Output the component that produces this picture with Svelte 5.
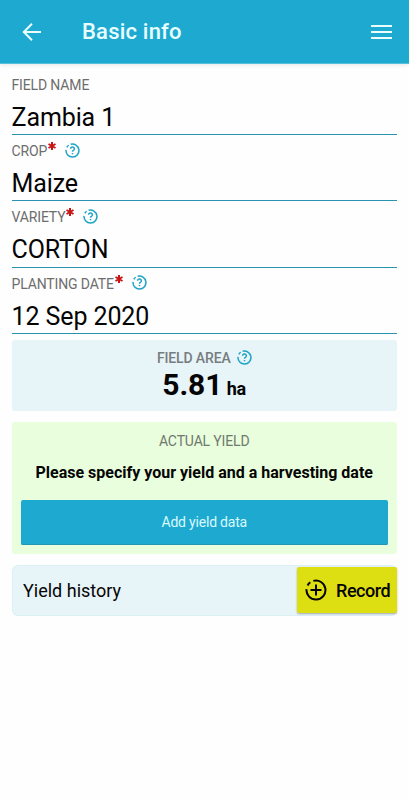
<script>
  const fields = [
    { label: 'Field name', value: 'Zambia 1' },
    { label: 'Crop', value: 'Maize', required: true },
    { label: 'Variety', value: 'CORTON', required: true },
    { label: 'Planting date', value: '12 Sep 2020', required: true }
  ]
</script>

{#snippet helpIcon()}
  <svg class="help" viewBox="0 0 16 16" aria-hidden="true">
    <path d="M6 1.4A6.9 6.9 0 1 1 1.1 7.3" />
    <path d="M2 4.6A6.9 6.9 0 0 1 3.9 2.4" />
    <path d="M6 6.2A2 1.9 0 1 1 9 7.8Q8 8.3 8 9.3M8 10.6V12.1" />
  </svg>
{/snippet}

<div class="screen">
  <header>
    <button class="back" aria-label="Back">
      <svg width="20" height="20" viewBox="0 0 20 20">
        <path d="M19 10H2M10 1.8L1.8 10L10 18.2" />
      </svg>
    </button>
    <h1>Basic info</h1>
    <button class="menu" aria-label="Menu">
      <span></span>
      <span></span>
      <span></span>
    </button>
  </header>

  <main>
    {#each fields as field}
      <div class="field">
        <div class="label">
          <span class="label-text">{field.label}</span>
          {#if field.required}
            <svg class="required" viewBox="0 0 8 8" aria-label="required">
              <path d="M4 0V8M0.5 2L7.5 6M7.5 2L0.5 6" />
            </svg>
            {@render helpIcon()}
          {/if}
        </div>
        <div class="value">{field.value}</div>
      </div>
    {/each}

    <section class="area">
      <div class="area-label">
        <span>Field area</span>
        {@render helpIcon()}
      </div>
      <div class="area-value"><b>5.81</b> <span>ha</span></div>
    </section>

    <section class="yield">
      <div class="yield-label">Actual yield</div>
      <p>Please specify your yield and a harvesting date</p>
      <button class="add">Add yield data</button>
    </section>

    <section class="history">
      <span class="history-title">Yield history</span>
      <button class="record">
        <svg width="22" height="22" viewBox="0 0 22 22">
          <path d="M8.3 1.9A9.5 9.5 0 1 1 1.5 10.2" />
          <path d="M2.6 6.5A9.5 9.5 0 0 1 5.3 3.3" />
          <path d="M11 5.5V16.5M5.5 11H16.5" />
        </svg>
        <span>Record</span>
      </button>
    </section>
  </main>
</div>

<style>
  :global(body) {
    background: #fefefe;
  }

  .screen {
    height: 800px;
    overflow: hidden;
    font-family: Roboto, sans-serif;
    color: #050505;
  }

  button {
    padding: 0;
    border: 0;
    background: none;
    font-family: inherit;
    color: inherit;
    cursor: pointer;
  }

  svg {
    display: block;
    flex: none;
    fill: none;
    stroke: currentColor;
  }

  header {
    display: flex;
    align-items: center;
    box-sizing: border-box;
    height: 64px;
    padding: 0 17px 0 22px;
    background: #1eaad0;
    border-bottom: 1px solid #58bfdc;
    box-shadow: 0 1px 4px rgba(0, 0, 0, 0.1);
    color: #e8feff;
  }

  .back svg {
    stroke-width: 2;
  }

  h1 {
    flex: 1;
    margin: 1px 0 0 40px;
    font-size: 22px;
    font-weight: 500;
    line-height: 28px;
    letter-spacing: 0.2px;
  }

  .menu {
    display: flex;
    flex-direction: column;
    gap: 4px;
    width: 21px;
  }

  .menu span {
    height: 2px;
    background: #e8feff;
  }

  main {
    padding: 4px 12px 0 11.5px;
  }

  .field {
    box-sizing: border-box;
    height: 66.3px;
    padding-top: 7px;
    border-bottom: 1px solid #2795b1;
  }

  .field:first-child {
    height: 67px;
    padding-top: 8px;
  }

  .label {
    display: flex;
    align-items: center;
    height: 18px;
    color: #6d6d6d;
    font-size: 14px;
    line-height: 18px;
    letter-spacing: -0.14px;
    text-transform: uppercase;
  }

  .required {
    width: 8px;
    height: 8px;
    margin: -10px 9px 0 1px;
    color: #c91414;
    stroke-width: 2;
  }

  .help {
    width: 15px;
    height: 15px;
    margin-top: -2px;
    color: #1ea4c6;
    stroke-width: 1.6;
  }

  .value {
    margin-top: 8px;
    font-size: 25px;
    line-height: 32px;
    letter-spacing: -0.1px;
  }

  .area {
    box-sizing: border-box;
    height: 71px;
    margin-top: 6px;
    padding-top: 9px;
    border-radius: 3px;
    background: #e7f4f8;
  }

  .area-label {
    display: flex;
    justify-content: center;
    align-items: center;
    gap: 6px;
    height: 19px;
    color: #777c7e;
    font-size: 14px;
    font-weight: 500;
    letter-spacing: -0.14px;
    text-transform: uppercase;
  }

  .area-value {
    text-align: center;
    font-size: 18px;
    font-weight: 700;
    line-height: 34px;
    letter-spacing: -0.1px;
  }

  .area-value b {
    font-size: 30px;
    font-weight: 700;
  }

  .yield {
    box-sizing: border-box;
    height: 132px;
    margin-top: 11px;
    padding: 10px 9px 0;
    border-radius: 3px;
    background: #e9fedd;
    text-align: center;
  }

  .yield-label {
    color: #70796d;
    font-size: 14px;
    line-height: 18px;
    letter-spacing: -0.14px;
    text-transform: uppercase;
  }

  .yield p {
    margin: 13px 0 17px;
    font-size: 16px;
    font-weight: 700;
    line-height: 20px;
    white-space: nowrap;
  }

  .add {
    display: block;
    width: 100%;
    height: 45px;
    border-radius: 2px;
    background: #1eaad0;
    box-shadow: inset 0 -1px #2495b2;
    color: #d9f9ff;
    font-size: 14px;
    letter-spacing: -0.2px;
  }

  .history {
    display: flex;
    align-items: center;
    justify-content: space-between;
    box-sizing: border-box;
    height: 51px;
    margin-top: 11px;
    padding-left: 10.5px;
    border: 1px solid #daf0f5;
    border-right: 0;
    border-radius: 6px;
    background: #e7f4f8;
  }

  .history-title {
    font-size: 18px;
  }

  .record {
    display: flex;
    align-items: center;
    gap: 9px;
    box-sizing: border-box;
    width: 100px;
    height: 46px;
    padding-left: 8px;
    border-radius: 2px;
    background: #dedf12;
    box-shadow: 0 1px 2px rgba(0, 0, 0, 0.3);
    font-size: 18px;
    font-weight: 500;
    letter-spacing: -0.45px;
  }

  .record svg {
    stroke-width: 2;
  }
</style>
